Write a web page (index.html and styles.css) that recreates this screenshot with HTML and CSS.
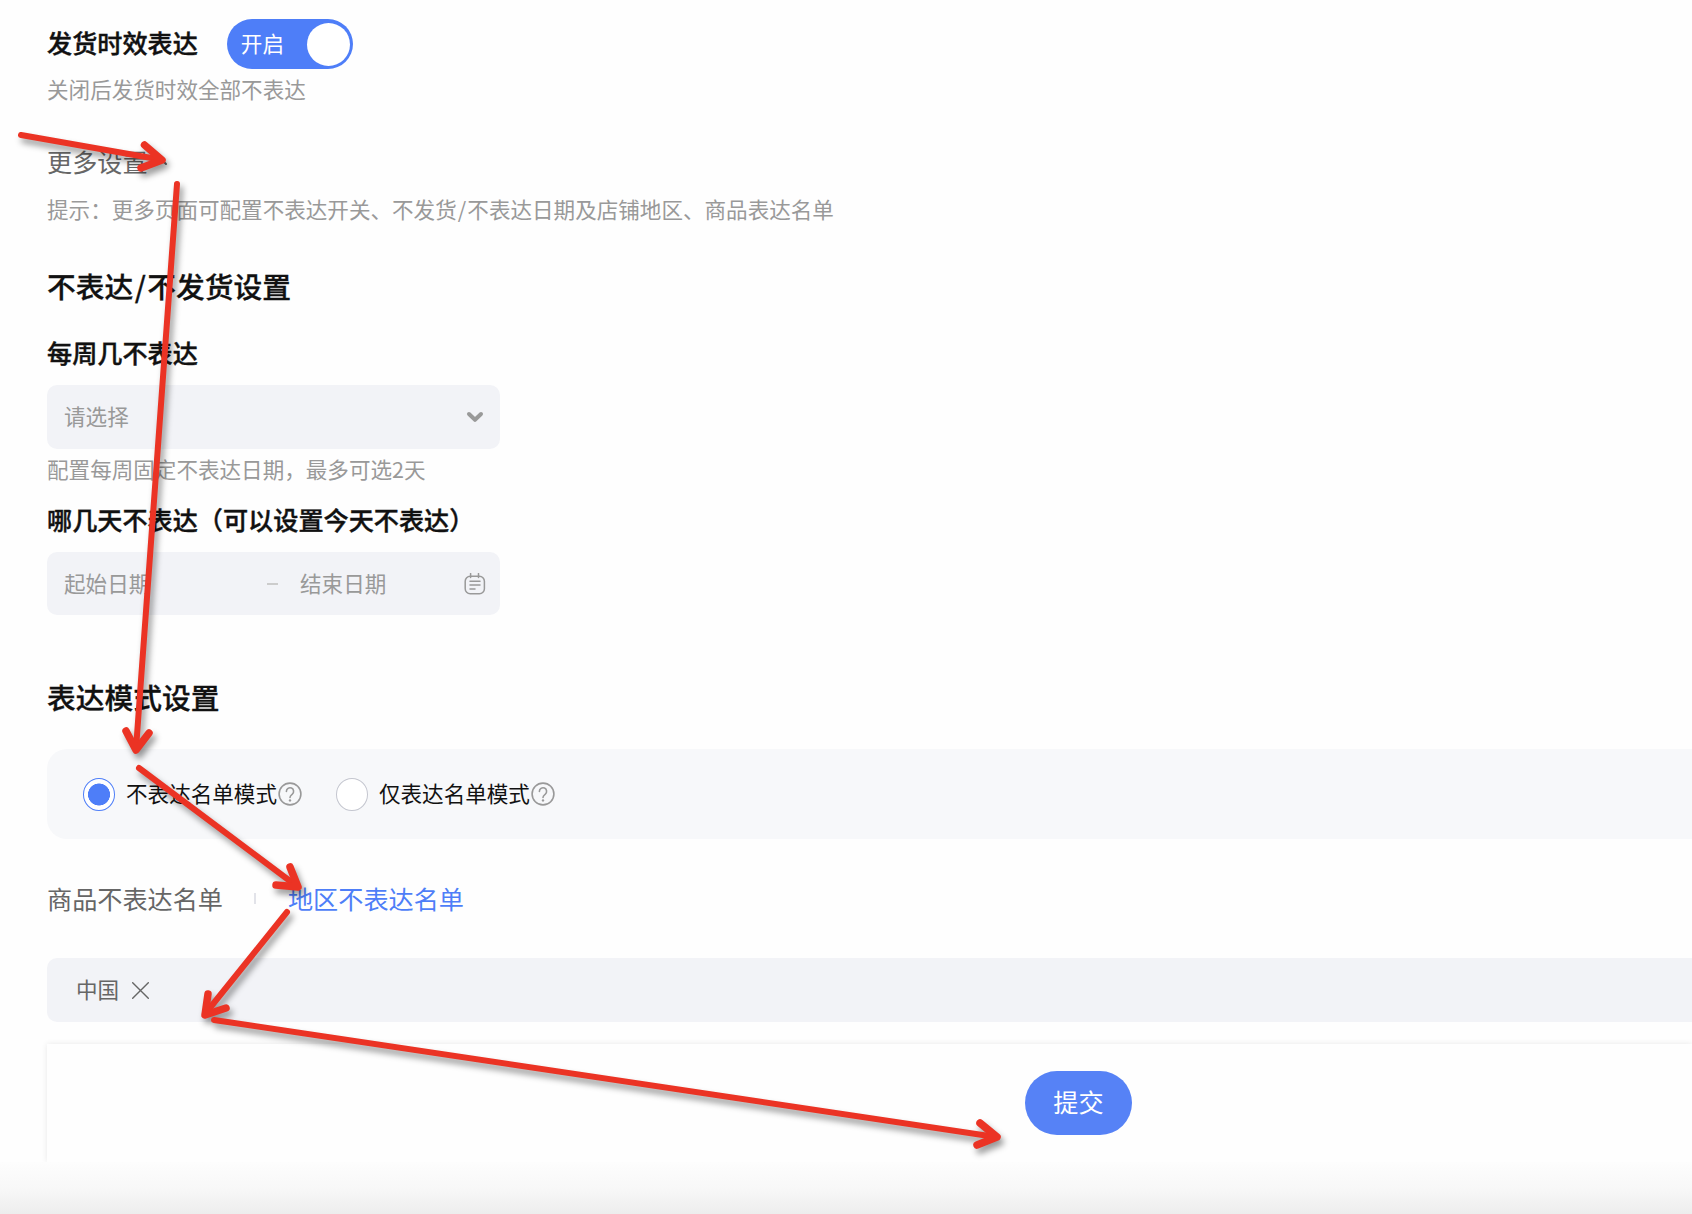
FILE: index.html
```html
<!DOCTYPE html>
<html lang="zh-CN">
<head>
    <meta charset="UTF-8">
    <meta name="viewport" content="width=device-width, initial-scale=1.0">
    <title>发货时效表达</title>
    <link rel="stylesheet" href="styles.css">
</head>
<body>
    <main class="page">
        <div class="switch-row">
            <span class="label">发货时效表达</span>
            <button class="switch" role="switch" aria-checked="true">
                <span>开启</span>
                <span class="knob"></span>
            </button>
        </div>
        <p class="hint">关闭后发货时效全部不表达</p>

        <div class="more">
            <span>更多设置</span>
            <svg width="14" height="9" viewBox="0 0 14 9"><path d="M2 7 7 2l5 5"/></svg>
        </div>
        <p class="hint more-hint">提示：更多页面可配置不表达开关、不发货<span class="slash">/</span>不表达日期及店铺地区、商品表达名单</p>

        <h2 class="title">不表达<span class="slash">/</span>不发货设置</h2>
        <div class="label week-label">每周几不表达</div>
        <div class="field">
            <span>请选择</span>
            <svg class="chevron" width="18" height="12" viewBox="0 0 18 12"><path d="M3 3l6 5.8L15 3"/></svg>
        </div>
        <p class="hint">配置每周固定不表达日期，最多可选2天</p>
        <div class="label days-label">哪几天不表达（可以设置今天不表达）</div>
        <div class="field date-field">
            <span class="start">起始日期</span>
            <span class="dash"></span>
            <span class="end">结束日期</span>
            <svg class="calendar" width="22" height="22" viewBox="0 0 22 22">
                <rect x="1.2" y="3.2" width="19.2" height="17.6" rx="5"/>
                <path d="M6.6 0.5v4M14.5 0.5v4M6 8.2h10M6 12.1h10M6 16h5"/>
            </svg>
        </div>

        <h2 class="title mode-title">表达模式设置</h2>
        <div class="mode-box">
            <div class="radio">
                <span class="circle checked"></span>
                <span class="text">不表达名单模式</span>
                <svg class="help" width="24" height="24" viewBox="0 0 24 24">
                    <circle cx="12" cy="12" r="10.9"/>
                    <path d="M8.4 9.4a3.6 3.6 0 1 1 5.9 2.7c-1.4 1.1-2.3 1.7-2.3 3.4"/>
                    <circle class="dot" cx="12" cy="18.4" r="1.2"/>
                </svg>
            </div>
            <div class="radio">
                <span class="circle"></span>
                <span class="text">仅表达名单模式</span>
                <svg class="help" width="24" height="24" viewBox="0 0 24 24">
                    <circle cx="12" cy="12" r="10.9"/>
                    <path d="M8.4 9.4a3.6 3.6 0 1 1 5.9 2.7c-1.4 1.1-2.3 1.7-2.3 3.4"/>
                    <circle class="dot" cx="12" cy="18.4" r="1.2"/>
                </svg>
            </div>
        </div>

        <div class="tabs">
            <span>商品不表达名单</span>
            <span class="divider"></span>
            <span class="active">地区不表达名单</span>
        </div>
        <div class="tag-box">
            <span class="text">中国</span>
            <svg width="17" height="17" viewBox="0 0 17 17"><path d="M.7.7l15.6 15.6M16.3.7L.7 16.3"/></svg>
        </div>

        <div class="footer">
            <button class="submit">提交</button>
        </div>
    </main>
    <div class="fade"></div>

    <!-- step arrows drawn over the form -->
    <svg class="arrows" width="1692" height="1214" viewBox="0 0 1692 1214">
        <path d="M21 135L160 159.500"/>
        <path d="M177 184L136 749"/>
        <path d="M139 768L298 887"/>
        <path d="M287 912L205 1014"/>
        <path d="M214 1020L996 1137"/>
        <path class="head" d="M144.500 145L162 160L141 168"/>
        <path class="head" d="M126 731L136 750L149 733"/>
        <path class="head" d="M290 867L298 887L276 885"/>
        <path class="head" d="M208 994L205 1015L226 1008"/>
        <path class="head" d="M980 1123L997 1137L977 1145"/>
    </svg>
</body>
</html>
```
FILE: styles.css
```css
* {
    box-sizing: border-box;
}
body {
    margin: 0;
    height: 1214px;
    overflow: hidden;
    background-color: #fefefe;
    color: #111;
    font-family: "Noto Sans CJK SC", sans-serif;
    font-size: 21.57px;
    line-height: 30px;
}
button {
    border: none;
    color: #fff;
    font-family: inherit;
}
svg {
    fill: none;
    stroke-linecap: round;
    stroke-linejoin: round;
}
.page {
    height: 1162px;
    padding: 19px 0 0 47px;
}
.switch-row {
    display: flex;
    align-items: center;
    height: 50px;
    gap: 29px;
}
.label {
    font-size: 25.15px;
    font-weight: 500;
    -webkit-text-stroke: 0.4px #111;
}
.switch-row .label {
    padding-bottom: 5px;
}
.switch {
    display: flex;
    align-items: center;
    justify-content: space-between;
    width: 126px;
    height: 50px;
    padding: 0 3px 0 14px;
    border-radius: 25px;
    background-color: #4e7ef8;
    font-size: 21.57px;
}
.switch span:first-child {
    padding-bottom: 4px;
}
.knob {
    width: 43px;
    height: 43px;
    border-radius: 50%;
    background-color: #fff;
}
.hint {
    margin: 5px 0 0;
    color: #999;
}
.slash {
    margin: 0 0.05em;
}
.more {
    display: flex;
    align-items: center;
    gap: 6px;
    margin-top: 42px;
    color: #666;
    font-size: 25.15px;
}
.more svg {
    stroke: #666;
    stroke-width: 2;
}
.more-hint {
    margin-top: 18px;
}
.title {
    margin: 42px 0 0;
    font-size: 28.75px;
    font-weight: 500;
    line-height: 40px;
    -webkit-text-stroke: 0.3px #111;
}
.week-label {
    margin: 31px 0 18px;
}
.days-label {
    margin: 20px 0 18px;
}
.field {
    display: flex;
    align-items: center;
    justify-content: space-between;
    width: 453px;
    height: 64px;
    padding: 0 16px 0 17px;
    border-radius: 10px;
    background-color: #f2f3f7;
    color: #999;
}
.field span:not(.dash), .text {
    padding-bottom: 2px;
}
.date-field {
    height: 63px;
    padding-right: 14px;
}
.chevron {
    stroke: #999;
    stroke-width: 4;
}
.start {
    width: 203px;
}
.dash {
    width: 11px;
    height: 2px;
    background-color: #ccc;
}
.end {
    flex: 1;
    margin-left: 22px;
}
.calendar {
    stroke: #999;
    stroke-width: 1.5;
}
.mode-title {
    margin-top: 62px;
}
.mode-box {
    display: flex;
    align-items: center;
    gap: 34px;
    height: 90px;
    margin-top: 32px;
    padding-left: 36px;
    border-radius: 20px 0 0 20px;
    background-color: #f7f8fa;
}
.radio {
    display: flex;
    align-items: center;
}
.circle {
    width: 32px;
    height: 33px;
    margin-right: 11px;
    border: 1px solid #c4c6cf;
    border-radius: 50%;
    background-color: #fff;
}
.circle.checked {
    border-color: #4e7ef8;
    background: radial-gradient(circle, #4e7ef8 10.7px, #fff 11.3px);
}
.help {
    margin-left: 1px;
    stroke: #999;
    stroke-width: 1.6;
}
.help .dot {
    fill: #999;
    stroke: none;
}
.tabs {
    display: flex;
    align-items: center;
    margin-top: 44px;
    color: #666;
    font-size: 25.15px;
}
.divider {
    width: 2px;
    height: 11px;
    margin: 0 32px 0 31px;
    background-color: #e2e3e9;
}
.active {
    color: #4e7ef8;
}
.tag-box {
    display: flex;
    align-items: center;
    gap: 13px;
    height: 64px;
    margin-top: 45px;
    padding-left: 29px;
    border-radius: 10px 0 0 10px;
    background-color: #f2f3f7;
    color: #666;
}
.tag-box svg {
    stroke: #666;
    stroke-width: 1.4;
}
.footer {
    display: flex;
    height: 118px;
    margin-top: 22px;
    padding: 27px 0 0 978px;
    background-color: #fefefe;
    box-shadow: 0 0 6px rgba(0, 0, 0, 0.09);
}
.submit {
    width: 107px;
    height: 64px;
    padding: 0 0 4px;
    border-radius: 32px;
    background-color: #5682f6;
    font-size: 25.15px;
}
.fade {
    position: relative;
    height: 52px;
    background: linear-gradient(#fdfdfd, #f8f8f8 50%, #ededed);
}
.arrows {
    position: absolute;
    top: 0;
    left: 0;
    stroke: #eb3324;
    stroke-width: 6;
    filter: drop-shadow(3px 5px 3px rgba(0, 0, 0, 0.4));
}
.head {
    stroke-width: 7.5;
}
```
